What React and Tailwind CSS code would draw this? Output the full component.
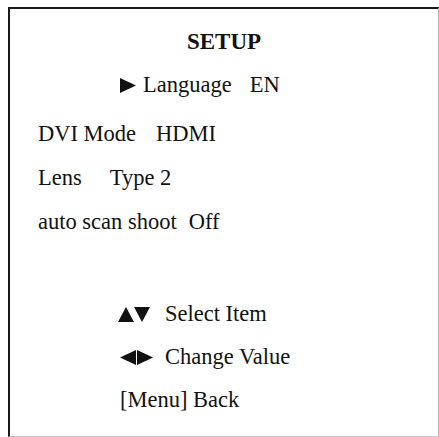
import React from "react";

const serif = { fontFamily: '"Liberation Serif", "Times New Roman", serif' };

function Tri({ dir, className = "" }) {
  const pts = {
    right: "0,0 16,7.5 0,15",
    left: "16,0 0,7.5 16,15",
    up: "8,0 16,15 0,15",
    down: "0,0 16,0 8,15",
  }[dir];
  return (
    <svg width="16" height="15" viewBox="0 0 16 15" className={className}>
      <polygon points={pts} fill="#111" />
    </svg>
  );
}

function Row({ className = "", children }) {
  return <div className={`flex items-center h-[26px] leading-[26px] ${className}`}>{children}</div>;
}

export default function App() {
  return (
    <div className="w-[439px] h-[437px] bg-white overflow-hidden" style={serif}>
      <div className="ml-[8px] mt-[7px] w-[431px] h-[430px] border-l-2 border-t-2 border-[#1a1a1a] border-r border-r-[#b5b5b5] border-b border-b-[#c8c8c8] text-[22.5px] text-[#111]">
        <div className="pt-[19px] h-[47px] text-center text-[23px] leading-[28px] font-bold">SETUP</div>

        <Row className="mt-[16px] pl-[110px]">
          <Tri dir="right" />
          <span className="ml-[7px]">Language</span>
          <span className="ml-[18px]">EN</span>
        </Row>

        <Row className="mt-[23px] pl-[28px]">
          <span>DVI Mode</span>
          <span className="ml-[20px]">HDMI</span>
        </Row>

        <Row className="mt-[18px] pl-[28px]">
          <span>Lens</span>
          <span className="ml-[28px]">Type 2</span>
        </Row>

        <Row className="mt-[18px] pl-[28px]">
          <span>auto scan shoot</span>
          <span className="ml-[12px]">Off</span>
        </Row>

        <Row className="mt-[66px] pl-[108px]">
          <Tri dir="up" />
          <Tri dir="down" />
          <span className="ml-[15px]">Select Item</span>
        </Row>

        <Row className="mt-[17px] pl-[110px]">
          <Tri dir="left" />
          <Tri dir="right" className="ml-[1px]" />
          <span className="ml-[12px]">Change Value</span>
        </Row>

        <Row className="mt-[17px] pl-[110px]">
          <span>[Menu] Back</span>
        </Row>
      </div>
    </div>
  );
}
